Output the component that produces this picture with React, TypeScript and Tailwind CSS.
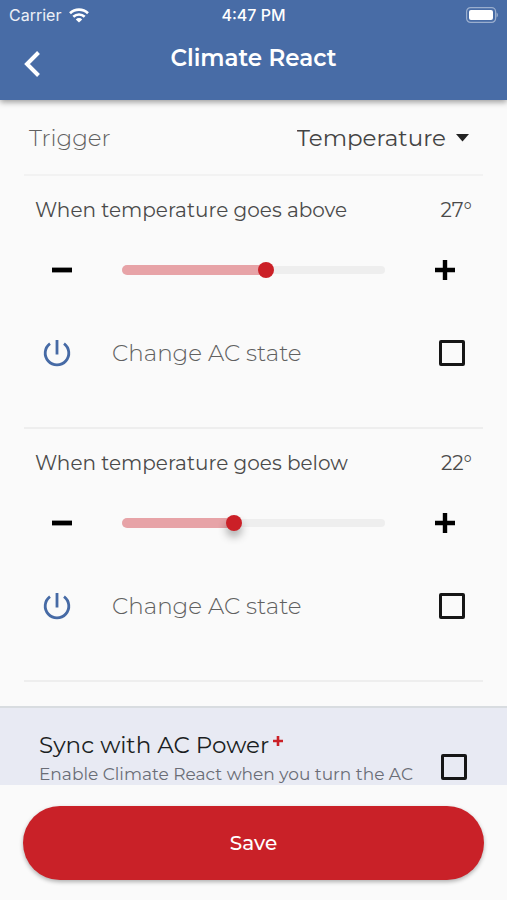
import { useState } from "react";

const MIN = 6;
const MAX = 44;

function CheckBox({ id }: { id: string }) {
  return (
    <input
      id={id}
      type="checkbox"
      className="size-[26px] shrink-0 appearance-none rounded-[2px] border-3 border-[#161616] checked:bg-[#161616]"
    />
  );
}

function MinusIcon() {
  return (
    <svg width="20" height="20" viewBox="0 0 20 20" aria-hidden="true">
      <path d="M0 7.6h20v4.8H0z" fill="#000" />
    </svg>
  );
}

function PlusIcon() {
  return (
    <svg width="20" height="20" viewBox="0 0 20 20" aria-hidden="true">
      <path d="M0 7.8h7.8V0h4.4v7.8H20v4.4h-7.8V20H7.800v-7.800H0z" fill="#000" />
    </svg>
  );
}

function PowerIcon() {
  return (
    <svg width="30" height="30" viewBox="0 0 30 30" fill="none" stroke="#466aa5" strokeWidth="2.8" aria-hidden="true">
      <path d="M15 2v14.500" />
      <path d="M8 5.600a11.800 11.800 0 1 0 14 0" />
    </svg>
  );
}

type SectionProps = { id: string; title: string; initial: number; raised?: boolean };

function ThresholdSection({ id, title, initial, raised }: SectionProps) {
  const [value, setValue] = useState(initial);
  const fraction = (value - MIN) / (MAX - MIN);
  return (
    <section className="pt-5">
      <div className="flex h-7 items-center justify-between px-[35px] text-xl text-[#4a4a4a]">
        <label htmlFor={id}>{title}</label>
        <output htmlFor={id}>{value}°</output>
      </div>
      <div className="mt-[26px] flex h-10 items-center gap-10 px-[42px]">
        <button
          type="button"
          aria-label="Decrease"
          onClick={() => setValue(Math.max(MIN, value - 1))}
          className="flex size-10 shrink-0 items-center justify-center"
        >
          <MinusIcon />
        </button>
        <div className="grid min-w-0 flex-1 items-center">
          <div className="col-start-1 row-start-1 h-2 rounded-full bg-[#eeeeee]" />
          <div
            className="col-start-1 row-start-1 h-[10px] rounded-l-full bg-[#e7a3a7]"
            style={{ width: `calc(8px + (100% - 16px) * ${fraction})` }}
          />
          <input
            id={id}
            type="range"
            min={MIN}
            max={MAX}
            value={value}
            onChange={(e) => setValue(Number(e.target.value))}
            className={
              "col-start-1 row-start-1 h-4 w-full appearance-none bg-transparent [&::-webkit-slider-thumb]:size-4 [&::-webkit-slider-thumb]:appearance-none [&::-webkit-slider-thumb]:rounded-full [&::-webkit-slider-thumb]:bg-[#cb2027] " +
              (raised ? "[&::-webkit-slider-thumb]:shadow-[0_6px_8px_rgba(0,0,0,0.3)]" : "")
            }
          />
        </div>
        <button
          type="button"
          aria-label="Increase"
          onClick={() => setValue(Math.min(MAX, value + 1))}
          className="flex size-10 shrink-0 items-center justify-center"
        >
          <PlusIcon />
        </button>
      </div>
      <div className="mt-[43px] flex h-10 items-center gap-10 px-[42px]">
        <PowerIcon />
        <label htmlFor={`${id}-state`} className="flex-1 text-[23px] font-light text-[#606060]">
          Change AC state
        </label>
        <CheckBox id={`${id}-state`} />
      </div>
      <hr className="mx-6 mt-[54px] border-t-2 border-[#eeeeee]" />
    </section>
  );
}

export default function App() {
  return (
    <div className="flex h-screen flex-col bg-[#fafafa] font-['Montserrat','Inter',sans-serif]">
      <header className="z-10 h-[100px] shrink-0 bg-[#486ca6] text-white shadow-[0_2px_6px_rgba(0,0,0,0.4)]">
        <div className="grid h-[30px] grid-cols-3 items-center px-[9px] font-['Inter',sans-serif] text-base">
          <div className="flex items-center gap-2 text-white/90">
            <span>Carrier</span>
            <svg width="20" height="15" viewBox="0 0 20 15" fill="none" stroke="#fff" strokeWidth="2.6" aria-hidden="true">
              <path d="M1 5.2a13 13 0 0 1 18 0" />
              <path d="M4.3 8.8a8.2 8.2 0 0 1 11.4 0" />
              <path d="M10 14.6 6.8 11.4a4.600 4.600 0 0 1 6.400 0z" fill="#fff" stroke="none" />
            </svg>
          </div>
          <div className="text-center font-medium">4:47 PM</div>
          <svg className="justify-self-end" width="32" height="16" viewBox="0 0 32 16" aria-hidden="true">
            <rect x="0.6" y="0.6" width="29" height="14.8" rx="4" fill="none" stroke="#fff" strokeOpacity="0.45" strokeWidth="1.2" />
            <rect x="3" y="3" width="24" height="10" rx="2" fill="#fff" />
            <path d="M30.600 5.500c1.600.8 1.600 4.200 0 5z" fill="#fff" fillOpacity="0.5" />
          </svg>
        </div>
        <div className="grid grid-cols-[40px_1fr_40px] px-3">
          <button type="button" aria-label="Back" className="flex h-[68px] items-center justify-center">
            <svg width="18" height="28" viewBox="0 0 18 28" fill="none" stroke="#fff" strokeWidth="4" aria-hidden="true">
              <path d="M15.5 2.5 4 14l11.5 11.5" />
            </svg>
          </button>
          <h1 className="text-center text-[23px] leading-[56px] font-semibold">Climate React</h1>
        </div>
      </header>

      <main className="min-h-0 flex-1 overflow-hidden">
        <div className="flex h-[74px] items-center justify-between pt-0.5 pr-[38px] pl-[29px] text-[23px]">
          <label htmlFor="trigger" className="font-light text-[#606060]">Trigger</label>
          <div className="flex items-center gap-[10px]">
            <select id="trigger" className="field-sizing-content appearance-none bg-transparent text-right text-[#444444]">
              <option>Temperature</option>
            </select>
            <svg width="13" height="8" viewBox="0 0 13 8" aria-hidden="true">
              <path d="M0 0h13L6.5 7.5z" fill="#222" />
            </svg>
          </div>
        </div>
        <hr className="mx-6 border-t-2 border-[#f2f2f2]" />

        <ThresholdSection id="above" title="When temperature goes above" initial={27} />
        <ThresholdSection id="below" title="When temperature goes below" initial={22} raised />

        <div className="mt-6 flex justify-between border-t-2 border-[#d8dce0] bg-[#e8eaf3] pt-5 pr-10 pl-[39px]">
          <label htmlFor="sync" className="flex flex-col">
            <span className="flex items-start gap-1 text-[23px] leading-[34px] text-[#1b1e22]">
              Sync with AC Power
              <svg className="mt-2" width="10" height="10" viewBox="0 0 10 10" aria-hidden="true">
                <path d="M0 3.700h3.700V0h2.600v3.700H10v2.600H6.300V10H3.700V6.300H0z" fill="#cb2027" />
              </svg>
            </span>
            <span className="text-[17px] leading-6 text-[#6a6d76]">Enable Climate React when you turn the AC</span>
          </label>
          <div className="pt-[26px]">
            <CheckBox id="sync" />
          </div>
        </div>
      </main>

      <footer className="z-10 shrink-0 bg-[#fafafa] px-[23px] pt-[21px] pb-5">
        <button
          type="button"
          className="h-[74px] w-full rounded-full bg-[#c92128] text-xl font-medium text-white shadow-[0_2px_4px_rgba(0,0,0,0.3)]"
        >
          Save
        </button>
      </footer>
    </div>
  );
}
